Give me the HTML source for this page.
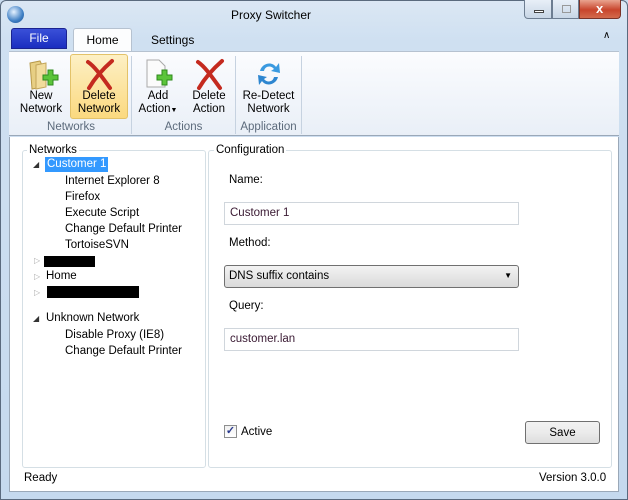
<!DOCTYPE html>
<html><head><style>
*{box-sizing:border-box;margin:0;padding:0}
body{width:628px;height:500px;overflow:hidden;font-family:"Liberation Sans",sans-serif;font-size:11.5px;color:#000;background:#c9dbee;position:relative}
.a{position:absolute}
.frame{left:0;top:0;width:628px;height:500px;background:linear-gradient(180deg,#dbe7f4 0,#cfe0f1 40px,#c5d9ee 100%);border:1px solid #5a6a7e;border-radius:6px 6px 0 0}
.t{white-space:nowrap}
</style></head><body>
<div class="a frame"></div>
<div class="a" style="left:7px;top:6px;width:17px;height:17px;border-radius:50%;background:radial-gradient(circle at 40% 35%,#e6f2ff,#3f7fc4 60%,#1c4f8c)"></div>
<div class="a t" style="left:231px;top:8px;font-size:12px">Proxy Switcher</div>
<div class="a" style="left:524px;top:0;width:28px;height:19px;border:1px solid #6d7d91;border-top:none;border-radius:0 0 0 4px;background:linear-gradient(#e8eff8,#c8d6e6)"><div class="a" style="left:9px;top:10px;width:10px;height:3px;border:1px solid #444;background:#fff"></div></div>
<div class="a" style="left:552px;top:0;width:27px;height:19px;border:1px solid #6d7d91;border-top:none;background:linear-gradient(#e8eff8,#c8d6e6)"><div class="a" style="left:9px;top:5px;width:9px;height:8px;border:1px solid #999"></div></div>
<div class="a" style="left:579px;top:0;width:42px;height:19px;border:1px solid #7a3328;border-top:none;border-radius:0 0 4px 0;background:linear-gradient(#e9a48f,#c8452c 55%,#d36a4c)"><div class="a t" style="left:16px;top:1px;color:#fff;font-weight:bold;font-size:13px">x</div></div>
<div class="a" style="left:11px;top:28px;width:56px;height:21px;background:linear-gradient(#3a50d8,#1a2ec0);border:1px solid #1a2390;border-radius:3px 3px 0 0;color:#fff;text-align:center;line-height:19px;font-size:12px">File</div>
<div class="a" style="left:73px;top:28px;width:59px;height:24px;background:#fcfdfe;border:1px solid #b6c2d0;border-bottom:none;border-radius:3px 3px 0 0;text-align:center;line-height:22px;font-size:12px">Home</div>
<div class="a t" style="left:151px;top:33px;font-size:12px">Settings</div>
<div class="a t" style="left:603px;top:30px;font-size:10px">&#x2227;</div>
<div class="a" style="left:9px;top:51px;width:610px;height:85px;background:linear-gradient(#fbfcfe,#e9eff7);border-top:1px solid #b6c2d0;border-bottom:1px solid #9aa8b8"></div>
<div class="a" style="left:70px;top:54px;width:58px;height:65px;background:linear-gradient(#fdf0c5,#fbd97f);border:1px solid #e3c269;border-radius:3px"></div>
<div class="a" style="left:131px;top:56px;width:1px;height:78px;background:#c6d2e0"></div>
<div class="a" style="left:235px;top:56px;width:1px;height:78px;background:#c6d2e0"></div>
<div class="a" style="left:301px;top:56px;width:1px;height:78px;background:#c6d2e0"></div>
<svg class="a" style="left:26px;top:57px" width="34" height="34"><path d="M4 6 L14 4 L16 8 L16 30 L6 32 Z" fill="#e7cf84" stroke="#b89a4a"/><path d="M10 8 L20 6 L20 30 L10 32Z" fill="#f1dc9c" stroke="#c3a55a"/><path d="M17 18h5v-5h5v5h5v5h-5v5h-5v-5h-5z" fill="#5bc43a" stroke="#2f8a1d"/></svg>
<svg class="a" style="left:84px;top:58px" width="32" height="32"><path d="M4 4 C10 8 16 16 26 30 M28 3 C20 10 12 18 5 30" stroke="#c42a1f" stroke-width="4" fill="none" stroke-linecap="round"/></svg>
<svg class="a" style="left:142px;top:57px" width="34" height="34"><path d="M5 3h12l6 6v21H5z" fill="#fbfbfb" stroke="#aaa"/><path d="M15 18h5v-5h5v5h5v5h-5v5h-5v-5h-5z" fill="#5bc43a" stroke="#2f8a1d"/></svg>
<svg class="a" style="left:194px;top:58px" width="32" height="32"><path d="M4 4 C10 8 16 16 26 30 M28 3 C20 10 12 18 5 30" stroke="#c42a1f" stroke-width="4" fill="none" stroke-linecap="round"/></svg>
<svg class="a" style="left:254px;top:57px" width="30" height="34"><path d="M6 14 C8 6 18 4 22 10 L25 6 L26 16 L17 14 L20 12 C17 8 11 9 10 14Z" fill="#3a9ae0"/><path d="M24 20 C22 28 12 30 8 24 L5 28 L4 18 L13 20 L10 22 C13 26 19 25 20 20Z" fill="#2d86d0"/></svg>
<div class="a" style="left:12px;top:90px;width:58px;text-align:center;line-height:13px">New<br>Network</div>
<div class="a" style="left:70px;top:90px;width:58px;text-align:center;line-height:13px">Delete<br>Network</div>
<div class="a" style="left:134px;top:90px;width:48px;text-align:center;line-height:13px">Add<br>Action<span style="font-size:7px">▼</span></div>
<div class="a" style="left:184px;top:90px;width:50px;text-align:center;line-height:13px">Delete<br>Action</div>
<div class="a" style="left:236px;top:90px;width:65px;text-align:center;line-height:13px">Re-Detect<br>Network</div>
<div class="a" style="left:12px;top:121px;width:118px;text-align:center;color:#5c6a7b">Networks</div>
<div class="a" style="left:132px;top:121px;width:103px;text-align:center;color:#5c6a7b">Actions</div>
<div class="a" style="left:236px;top:121px;width:65px;text-align:center;color:#5c6a7b">Application</div>
<div class="a" style="left:9px;top:137px;width:610px;height:355px;background:#fff;border-left:1px solid #9aa8b8;border-right:1px solid #9aa8b8;border-bottom:1px solid #9aa8b8"></div>
<div class="a" style="left:22px;top:150px;width:184px;height:318px;border:1px solid #d5dfe5;border-radius:3px"></div>
<div class="a t" style="left:27px;top:144px;background:#fff;padding:0 2px">Networks</div>
<div class="a" style="left:208px;top:150px;width:404px;height:318px;border:1px solid #d5dfe5;border-radius:3px"></div>
<div class="a t" style="left:214px;top:144px;background:#fff;padding:0 2px">Configuration</div>
<div class="a t" style="left:33px;top:160px;font-size:8px;color:#333">◢</div>
<div class="a t" style="left:45px;top:157px;background:#3399ff;color:#fff;padding:0 2px;height:15px;line-height:15px">Customer 1</div>
<div class="a t" style="left:65px;top:173px;line-height:16px">Internet Explorer 8<br>Firefox<br>Execute Script<br>Change Default Printer<br>TortoiseSVN</div>
<div class="a t" style="left:34px;top:256px;font-size:8px;color:#aaa">▷</div>
<div class="a" style="left:44px;top:256px;width:51px;height:11px;background:#000"></div>
<div class="a t" style="left:34px;top:272px;font-size:8px;color:#aaa">▷</div>
<div class="a t" style="left:46px;top:270px">Home</div>
<div class="a t" style="left:34px;top:288px;font-size:8px;color:#aaa">▷</div>
<div class="a" style="left:47px;top:286px;width:92px;height:12px;background:#000"></div>
<div class="a t" style="left:33px;top:314px;font-size:8px;color:#333">◢</div>
<div class="a t" style="left:46px;top:312px">Unknown Network</div>
<div class="a t" style="left:65px;top:327px;line-height:16px">Disable Proxy (IE8)<br>Change Default Printer</div>
<div class="a t" style="left:229px;top:174px">Name:</div>
<div class="a" style="left:224px;top:202px;width:295px;height:23px;border:1px solid #d0d6dc;padding:4px 5px;color:#3a1a33">Customer 1</div>
<div class="a t" style="left:229px;top:237px">Method:</div>
<div class="a" style="left:224px;top:265px;width:295px;height:23px;border:1px solid #707070;border-radius:3px;background:linear-gradient(#f3f3f3,#e6e6e6 50%,#dadada);padding:4px 4px">DNS suffix contains<span class="a" style="right:6px;top:5px;font-size:8px">▼</span></div>
<div class="a t" style="left:229px;top:300px">Query:</div>
<div class="a" style="left:224px;top:328px;width:295px;height:23px;border:1px solid #d0d6dc;padding:4px 5px;color:#3a1a33">customer.lan</div>
<div class="a" style="left:224px;top:425px;width:13px;height:13px;border:1px solid #8e8f8f;background:linear-gradient(#f0f0f0,#fff);color:#2a3a8e;font-size:11px;line-height:11px;text-align:center;font-weight:bold">✓</div>
<div class="a t" style="left:241px;top:426px">Active</div>
<div class="a" style="left:525px;top:421px;width:75px;height:23px;border:1px solid #707070;border-radius:3px;background:linear-gradient(#f2f2f2,#ebebeb 50%,#dddddd);text-align:center;line-height:23px">Save</div>
<div class="a t" style="left:24px;top:472px">Ready</div>
<div class="a t" style="left:539px;top:472px">Version 3.0.0</div>
</body></html>
